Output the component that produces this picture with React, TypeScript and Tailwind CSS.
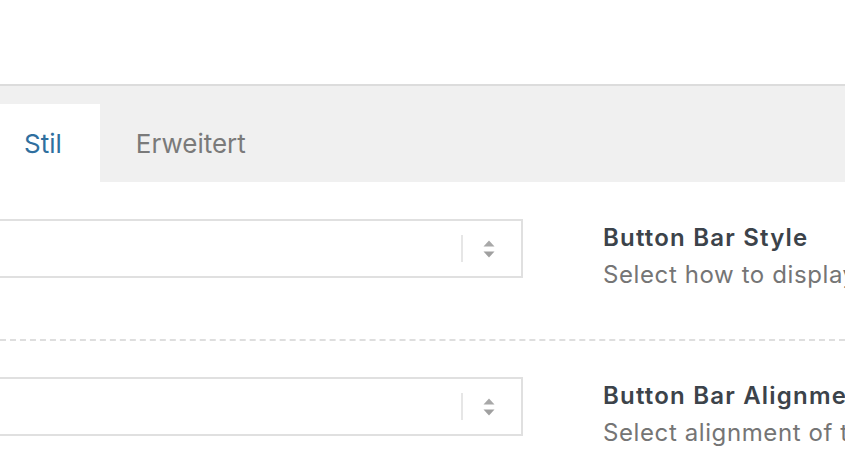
import React from "react";

function Arrows() {
  return (
    <svg width="12" height="18" viewBox="0 0 12 18" className="block">
      <path d="M6 0.5 L11.5 6.5 L0.5 6.5 Z" fill="#a8a8a8" />
      <path d="M6 17.5 L11.5 11.5 L0.5 11.5 Z" fill="#a0a0a0" />
    </svg>
  );
}

function Field({ label, desc }: { label: string; desc: string }) {
  return (
    <>
      <div className="ml-[-3px] w-[526px] h-[59px] shrink-0 border-2 border-[#e0e0e0] bg-white flex items-center justify-end">
        <div className="w-[2px] h-[27px] bg-[#e6e6e6] mr-[20px]" />
        <div className="mr-[26px]">
          <Arrows />
        </div>
      </div>
      <div className="ml-[80px] whitespace-nowrap">
        <div className="text-[24px] leading-[37px] font-semibold tracking-[1.2px] text-[#3c434a]">
          {label}
        </div>
        <div className="text-[24px] leading-[37px] tracking-[0.6px] text-[#757575]">{desc}</div>
      </div>
    </>
  );
}

export default function App() {
  return (
    <div
      className="w-[845px] h-[466px] overflow-hidden bg-white"
      style={{ fontFamily: "Inter, 'Liberation Sans', sans-serif" }}
    >
      <div className="h-[84px]" />
      <div className="border-t-2 border-[#dcdcdc] bg-[#f0f0f0] h-[98px] flex items-end">
        <div className="h-[78px] bg-white pl-[24px] pr-[38px] flex items-center text-[26px] text-[#2f6f9f]">
          Stil
        </div>
        <div className="h-[78px] px-[36px] flex items-center text-[26px] text-[#7a7a7a]">
          Erweitert
        </div>
      </div>
      <div className="flex flex-col">
        <div className="flex items-start pt-[37px] pb-[46px] border-b-2 border-dashed border-[#dedede]">
          <Field label="Button Bar Style" desc="Select how to display the buttons" />
        </div>
        <div className="flex items-start pt-[36px]">
          <Field label="Button Bar Alignment" desc="Select alignment of the button bar" />
        </div>
      </div>
    </div>
  );
}
